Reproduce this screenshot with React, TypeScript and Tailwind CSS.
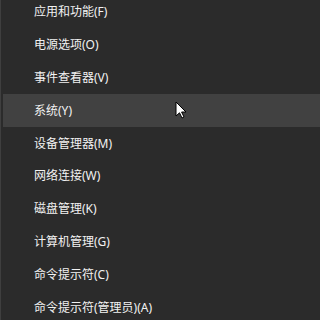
const items = [
  "应用和功能(F)",
  "电源选项(O)",
  "事件查看器(V)",
  "系统(Y)",
  "设备管理器(M)",
  "网络连接(W)",
  "磁盘管理(K)",
  "计算机管理(G)",
  "命令提示符(C)",
  "命令提示符(管理员)(A)",
];

const Cursor = () => (
  <svg
    className="absolute left-[174px] top-[101px]"
    width="12"
    height="18"
    viewBox="0 0 12 18"
  >
    <path
      d="M1 1 L1 15 L4.5 11.8 L7 17 L9 16 L6.6 11 L11 11 Z"
      fill="#ffffff"
      stroke="#000000"
      strokeWidth="1"
      strokeLinejoin="miter"
    />
  </svg>
);

export default function App() {
  return (
    <div className="relative w-full min-w-[223px] h-[320px] overflow-hidden bg-[#2b2b2b] border-l border-[#3f3f3f] font-['Noto_Sans','Noto_Sans_CJK_SC',sans-serif]">
      <ul className="mt-[-4px] pl-[2px]">
        {items.map((label) => (
          <li
            key={label}
            className={`flex items-center h-[32.8px] pl-[31px] text-[12px] text-[#f2f2f2] ${
              label === "系统(Y)" ? "bg-[#414141]" : ""
            }`}
          >
            {label}
          </li>
        ))}
      </ul>
      <Cursor />
    </div>
  );
}
